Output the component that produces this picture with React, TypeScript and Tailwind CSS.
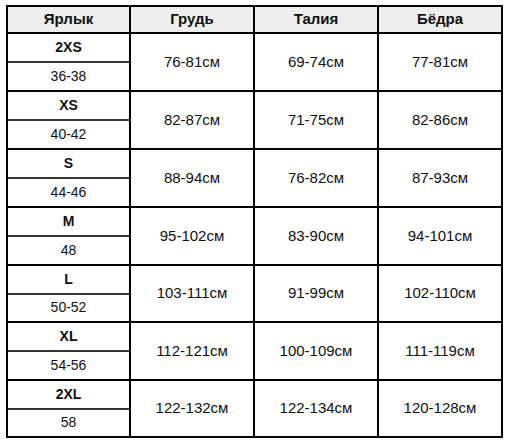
import React from "react";

const rows = [
  { label: "2XS", ru: "36-38", chest: "76-81см", waist: "69-74см", hips: "77-81см", h: "h-[58px]" },
  { label: "XS", ru: "40-42", chest: "82-87см", waist: "71-75см", hips: "82-86см", h: "h-[58px]" },
  { label: "S", ru: "44-46", chest: "88-94см", waist: "76-82см", hips: "87-93см", h: "h-[58px]" },
  { label: "M", ru: "48", chest: "95-102см", waist: "83-90см", hips: "94-101см", h: "h-[58px]" },
  { label: "L", ru: "50-52", chest: "103-111см", waist: "91-99см", hips: "102-110см", h: "h-[57px]" },
  { label: "XL", ru: "54-56", chest: "112-121см", waist: "100-109см", hips: "111-119см", h: "h-[58px]" },
  { label: "2XL", ru: "58", chest: "122-132см", waist: "122-134см", hips: "120-128см", h: "h-[55px]" },
];

export default function App() {
  return (
    <div className="w-[506px] h-[446px] bg-white pt-[5px] pl-[6px]" style={{ fontFamily: '"Liberation Sans", Arial, sans-serif' }}>
      <div className="w-[497px] border-2 border-black text-[#111]">
        <div className="grid grid-cols-[123px_124px_124px_122px] h-[27px] bg-[#eeeeee] border-b-2 border-black text-[15px] font-bold">
          <div className="flex items-center justify-center border-r-2 border-black">Ярлык</div>
          <div className="flex items-center justify-center border-r-2 border-black">Грудь</div>
          <div className="flex items-center justify-center border-r-2 border-black">Талия</div>
          <div className="flex items-center justify-center">Бёдра</div>
        </div>
        {rows.map((r, i) => (
          <div
            key={r.label}
            className={`grid grid-cols-[123px_124px_124px_122px] ${r.h} text-[15px] ${i < rows.length - 1 ? "border-b-2 border-black" : ""}`}
          >
            <div className="flex flex-col border-r-2 border-black text-[14px]">
              <div className="flex-1 flex items-center justify-center font-bold border-b-2 border-[#333]">{r.label}</div>
              <div className="flex-1 flex items-center justify-center">{r.ru}</div>
            </div>
            <div className="flex items-center justify-center border-r-2 border-black">{r.chest}</div>
            <div className="flex items-center justify-center border-r-2 border-black">{r.waist}</div>
            <div className="flex items-center justify-center">{r.hips}</div>
          </div>
        ))}
      </div>
    </div>
  );
}
